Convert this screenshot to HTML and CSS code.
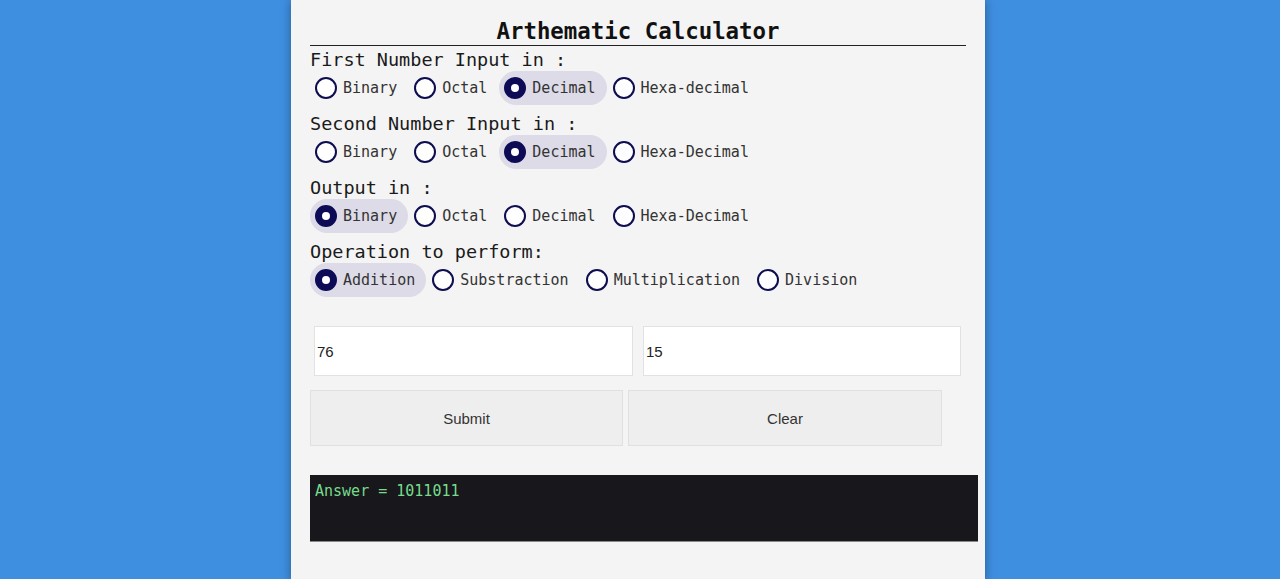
FILE: index.html
```html
<!DOCTYPE html>
<html>
<head>
<meta charset="utf-8">
<title>Arthematic Calculator</title>
<link rel="stylesheet" href="styles.css">
</head>
<body>
<div class="panel">
  <h1 class="title">Arthematic Calculator</h1>

  <div class="group">
    <div class="group-label">First Number Input in :</div>
    <div class="options">
      <label class="opt"><input type="radio" name="in1"><span>Binary</span></label>
      <label class="opt"><input type="radio" name="in1"><span>Octal</span></label>
      <label class="opt checked"><input type="radio" name="in1" checked><span>Decimal</span></label>
      <label class="opt"><input type="radio" name="in1"><span>Hexa-decimal</span></label>
    </div>
  </div>

  <div class="group">
    <div class="group-label">Second Number Input in :</div>
    <div class="options">
      <label class="opt"><input type="radio" name="in2"><span>Binary</span></label>
      <label class="opt"><input type="radio" name="in2"><span>Octal</span></label>
      <label class="opt checked"><input type="radio" name="in2" checked><span>Decimal</span></label>
      <label class="opt"><input type="radio" name="in2"><span>Hexa-Decimal</span></label>
    </div>
  </div>

  <div class="group">
    <div class="group-label">Output in :</div>
    <div class="options">
      <label class="opt checked"><input type="radio" name="out" checked><span>Binary</span></label>
      <label class="opt"><input type="radio" name="out"><span>Octal</span></label>
      <label class="opt"><input type="radio" name="out"><span>Decimal</span></label>
      <label class="opt"><input type="radio" name="out"><span>Hexa-Decimal</span></label>
    </div>
  </div>

  <div class="group">
    <div class="group-label">Operation to perform:</div>
    <div class="options">
      <label class="opt checked"><input type="radio" name="op" checked><span>Addition</span></label>
      <label class="opt"><input type="radio" name="op"><span>Substraction</span></label>
      <label class="opt"><input type="radio" name="op"><span>Multiplication</span></label>
      <label class="opt"><input type="radio" name="op"><span>Division</span></label>
    </div>
  </div>

  <div class="inputs">
    <input class="num num-a" type="text" value="76">
    <input class="num num-b" type="text" value="15">
  </div>

  <div class="buttons">
    <button class="btn btn-a">Submit</button>
    <button class="btn btn-b">Clear</button>
  </div>

  <div class="answer">Answer = 1011011</div>
</div>
</body>
</html>
```

FILE: styles.css
```css
html, body {
  margin: 0;
  padding: 0;
}

body {
  background: #3f8fe1;
  min-height: 100vh;
  font-family: "DejaVu Sans Mono", monospace;
  color: #111;
}

.panel {
  box-sizing: border-box;
  width: 694px;
  margin: 0 0 0 291px;
  min-height: 100vh;
  background: #f4f4f4;
  padding: 18px 19px 40px 19px;
  box-shadow: 0 0 10px rgba(0, 0, 0, 0.35);
}

.title {
  margin: 0;
  font-size: 22.4px;
  font-weight: bold;
  line-height: 27px;
  text-align: center;
  color: #111;
  border-bottom: 1px solid #222;
}

.group {
  margin-top: 8px;
}

.group:first-of-type {
  margin-top: 3px;
}

.group-label {
  font-size: 18.5px;
  line-height: 22px;
  color: #1a1a1a;
}

.options {
  display: flex;
  gap: 1px;
  height: 34px;
}

.opt {
  display: flex;
  align-items: center;
  gap: 6px;
  height: 34px;
  padding: 0 11px 0 5px;
  border-radius: 17px;
  font-size: 15px;
  color: #333;
  cursor: pointer;
}

.opt.checked {
  background: #dcdbe7;
}

.opt input {
  appearance: none;
  -webkit-appearance: none;
  box-sizing: border-box;
  width: 22px;
  height: 22px;
  margin: 0;
  border: 2px solid #0e0d4f;
  border-radius: 50%;
  background: #fff;
  flex: none;
}

.opt input:checked {
  border: 7px solid #0d0b55;
  background: #fff;
}

.inputs {
  display: flex;
  gap: 10px;
  margin-top: 29px;
  padding-left: 4px;
}

.num {
  box-sizing: border-box;
  height: 50px;
  margin: 0;
  padding: 0 2px;
  border: 1px solid #e2e2e2;
  background: #fff;
  font-family: "Liberation Sans", Arial, sans-serif;
  font-size: 15px;
  color: #222;
  outline: none;
}

.num-a { width: 319px; }
.num-b { width: 318px; }

.buttons {
  display: flex;
  gap: 5px;
  margin-top: 14px;
}

.btn {
  box-sizing: border-box;
  height: 56px;
  margin: 0;
  border: 1px solid #e0e0e0;
  background: #eeeeee;
  font-family: "Liberation Sans", Arial, sans-serif;
  font-size: 15px;
  color: #333;
}

.btn-a { width: 313px; }
.btn-b { width: 314px; }

.answer {
  box-sizing: border-box;
  width: 668px;
  height: 67px;
  margin-top: 29px;
  padding: 7px 5px;
  background: #18171c;
  color: #76dc8c;
  font-family: "DejaVu Sans Mono", monospace;
  font-size: 15px;
  line-height: 18px;
  border-bottom: 1px solid #888;
}
```
